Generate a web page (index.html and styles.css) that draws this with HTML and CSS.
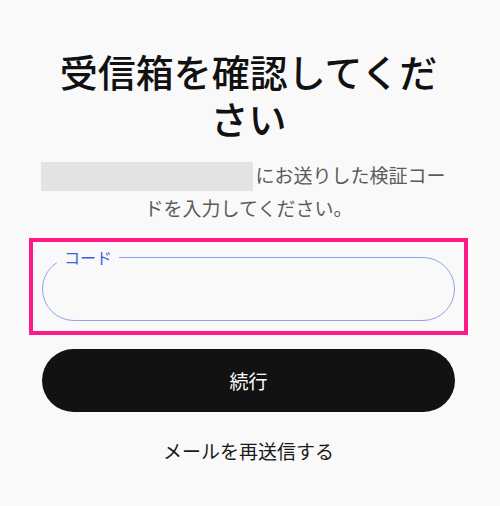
FILE: index.html
```html
<!DOCTYPE html>
<html lang="ja">
<head>
<meta charset="utf-8">
<title>受信箱を確認してください</title>
<link rel="stylesheet" href="styles.css">
</head>
<body>
<main class="page">
  <h1 class="title">受信箱を確認してください</h1>
  <p class="subtitle"><span class="redacted"></span>にお送りした検証コードを入力してください。</p>
  <div class="highlight">
    <fieldset class="field">
      <legend class="field-label">コード</legend>
      <input class="field-input" type="text" aria-label="コード">
    </fieldset>
  </div>
  <button class="primary" type="button">続行</button>
  <button class="link" type="button">メールを再送信する</button>
</main>
</body>
</html>
```

FILE: styles.css
```css
* { box-sizing: border-box; }
html, body { margin: 0; padding: 0; }
body {
  background: #f9f9f9;
  font-family: "Noto Sans CJK JP", "Noto Sans", sans-serif;
  color: #111;
  width: 500px;
  height: 506px;
  overflow: hidden;
}
.page {
  width: 413px;
  margin-left: 42px;
  padding-top: 47px;
  display: flex;
  flex-direction: column;
}
.title {
  margin: 0;
  font-size: 38px;
  line-height: 47px;
  font-weight: 500;
  text-align: center;
  color: #111;
}
.subtitle {
  margin: 18px 0 0;
  padding: 0 3px;
  font-size: 19px;
  line-height: 32px;
  color: #5b5b5b;
  text-align: center;
}
.redacted {
  display: inline-block;
  width: 212px;
  height: 29px;
  background: #e3e3e3;
  vertical-align: middle;
  margin-left: -10px;
  margin-right: 2px;
  position: relative;
  top: -1px;
}
.highlight {
  margin: 14px -13px 0;
  border: 4px solid #ff1a8c;
  padding: 7px 9px 10px;
}
.field {
  margin: 0;
  padding: 0 14px;
  border: 1px solid #8fa3e8;
  border-radius: 32px;
  min-width: 0;
}
.field-label {
  padding: 0 7px;
  font-size: 16px;
  line-height: 17px;
  color: #3b5fdc;
}
.field-input {
  display: block;
  width: 100%;
  height: 54px;
  border: 0;
  background: transparent;
  outline: none;
  font: inherit;
}
.primary {
  margin-top: 14px;
  height: 63px;
  border: 0;
  border-radius: 32px;
  background: #121212;
  color: #fff;
  font-family: inherit;
  font-size: 19px;
  cursor: pointer;
}
.link {
  margin-top: 24px;
  border: 0;
  background: transparent;
  font-family: inherit;
  font-size: 19px;
  line-height: 30px;
  color: #1a1a1a;
  padding: 0;
  cursor: pointer;
}
```
